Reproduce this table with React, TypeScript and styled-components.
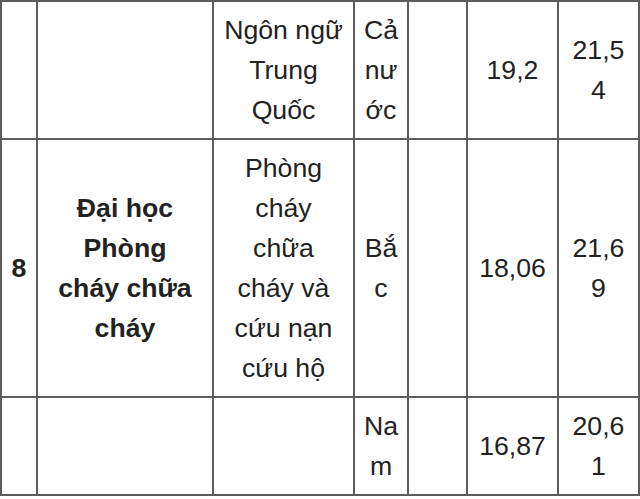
import React from "react";
import styled, { createGlobalStyle } from "styled-components";

const GlobalStyle = createGlobalStyle`
  * {
    box-sizing: border-box;
  }
  body {
    margin: 0;
    background: #fff;
    font-family: "Liberation Sans", Arial, sans-serif;
  }
`;

const Table = styled.table`
  width: 640px;
  table-layout: fixed;
  border-collapse: separate;
  border-spacing: 0;
  border-left: 2px solid #5c5c5c;
  border-top: 2px solid #5c5c5c;
  color: #222;
  font-size: 26.67px;
  line-height: 40px;
`;

const Cell = styled.td<{ $px?: number; $bold?: boolean }>`
  border-right: 2px solid #5c5c5c;
  border-bottom: 2px solid #5c5c5c;
  padding: 8px ${({ $px }) => $px ?? 8}px;
  text-align: center;
  vertical-align: middle;
  overflow-wrap: anywhere;
  word-break: break-word;
  font-weight: ${({ $bold }) => ($bold ? 700 : 400)};
`;

const colWidths = [36, 176, 141, 54, 59, 91, 81];

type Row = {
  no?: string;
  school?: string;
  major?: string;
  region: string;
  note?: string;
  score: string;
  score2: string;
};

const rows: Row[] = [
  { major: "Ngôn ngữ Trung Quốc", region: "Cả nước", score: "19,2", score2: "21,54" },
  {
    no: "8",
    school: "Đại học Phòng cháy chữa cháy",
    major: "Phòng cháy chữa cháy và cứu nạn cứu hộ",
    region: "Bắc",
    score: "18,06",
    score2: "21,69",
  },
  { region: "Nam", score: "16,87", score2: "20,61" },
];

export default function App() {
  return (
    <>
      <GlobalStyle />
      <Table>
        <colgroup>
          {colWidths.map((w, i) => (
            <col key={i} style={{ width: w }} />
          ))}
        </colgroup>
        <tbody>
          {rows.map((r, i) => (
            <tr key={i}>
              <Cell $bold>{r.no}</Cell>
              <Cell $bold $px={14}>
                {r.school}
              </Cell>
              <Cell $px={10}>{r.major}</Cell>
              <Cell>{r.region}</Cell>
              <Cell>{r.note}</Cell>
              <Cell>{r.score}</Cell>
              <Cell>{r.score2}</Cell>
            </tr>
          ))}
        </tbody>
      </Table>
    </>
  );
}
